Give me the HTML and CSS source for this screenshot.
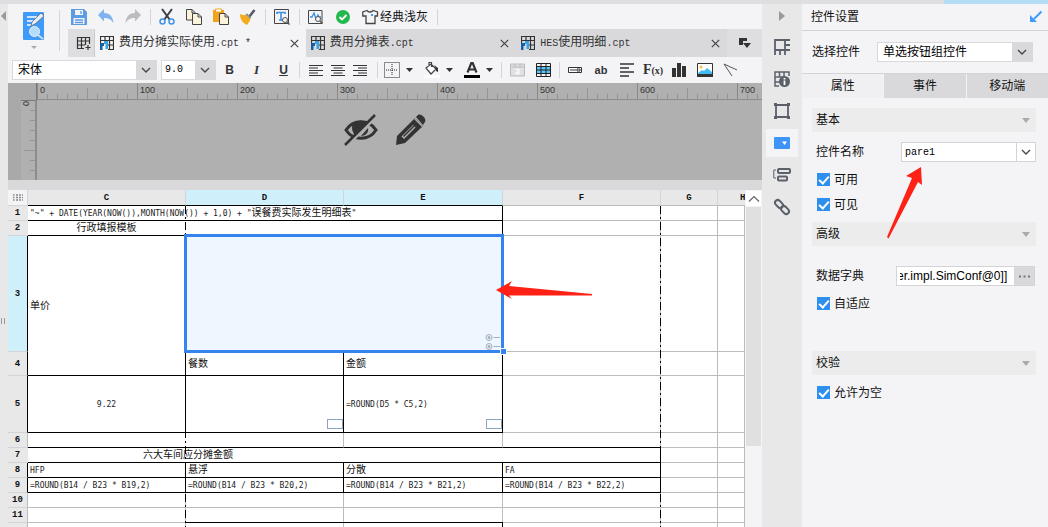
FILE: index.html
```html
<!DOCTYPE html>
<html lang="zh-CN">
<head>
<meta charset="utf-8">
<title>报表设计器</title>
<link rel="stylesheet" href="styles.css">
</head>
<body>
<svg class="defs" aria-hidden="true">
  <symbol id="chev" viewBox="0 0 10 10"><path d="M1 3l4 4 4-4" fill="none" stroke="#444" stroke-width="1.3"/></symbol>
  <symbol id="down" viewBox="0 0 8 8"><path d="M0 2h7L3.5 6z" fill="#333"/></symbol>
  <symbol id="x" viewBox="0 0 9 9"><path d="M.8.8l7.4 7.4M8.200.8L.8 8.200" stroke="#444" stroke-width="1.2"/></symbol>
  <symbol id="cpt" viewBox="0 0 14 14"><path d="M.5 7V.5h13v13H8M.5 4.500h13M5 .5v4M9.500.5v13M7 9h6.500" fill="none" stroke="#333" stroke-width="1.200"/><path d="M0 7h4v3H2.500v4H0z" fill="#1460a8"/><path d="M4 5h4v8H5.500V8H4z" fill="#38a4e8"/></symbol>
  <symbol id="lens" viewBox="0 0 8 8"><circle cx="3" cy="3" r="2.500" fill="#f4f4f7" stroke="#555"/><path d="M5 5l2.500 2.500" stroke="#555" stroke-width="1.500"/></symbol>
</svg>
<div class="titlebar"><div class="titlebar-accent"></div></div>
<div class="app">
  <aside class="gutter">
    <svg width="5" height="10"><path d="M5 0v10L0 5z" fill="#999"/></svg>
    <svg class="grip" width="4" height="6"><path d="M.5 0v6M3.500 0v6" stroke="#999"/></svg>
  </aside>
  <main class="editor">
    <header class="head">
      <button class="template" aria-label="模板">
        <svg width="24" height="30" viewBox="0 0 24 30"><rect x="1" y="1" width="21" height="28" rx="1" fill="#3f9bfa"/><path d="M5 6h10M5 10h7M5 14h4" stroke="#fff" stroke-width="1.500"/><path d="M9 15l1-4L19 2l3 3-9 8z" fill="#e8eef4" stroke="#667" stroke-width=".8"/><circle cx="12.500" cy="20.500" r="5" fill="#b4dcf8" stroke="#e8f2fa"/><path d="M16 24l5 4" stroke="#d4dade" stroke-width="2"/></svg>
        <svg width="6" height="4"><path d="M0 0h6L3 3z" fill="#aaa"/></svg>
      </button>
      <div class="head-right">
        <div class="tools">
          <button aria-label="保存"><svg width="16" height="16"><path d="M0 0h13l3 3v13H0z" fill="#5d9ce0"/><path d="M4 1h8v5H4zM2.500 9h11v6h-11z" fill="#f4f4f7"/><path d="M10 2v3M4 11h8M4 13.500h8" stroke="#5d9ce0" stroke-width="1.300"/></svg></button>
          <button aria-label="撤销"><svg width="16" height="16"><path d="M6 0v4c6 0 9 4 9.500 10C13 10 10 9 6 9v3.500L0 6z" fill="#7fb2ee"/></svg></button>
          <button aria-label="重做"><svg width="16" height="16"><path d="M10 0v4C4 4 1 8 .5 14 3 10 6 9 10 9v3.500L16 6z" fill="#bcbcbe"/></svg></button>
          <i class="sep"></i>
          <button aria-label="剪切"><svg width="16" height="16"><path d="M3 0l8 11M13 0L5 11" stroke="#3a3f4a" stroke-width="2"/><circle cx="3.500" cy="12.500" r="2.500" fill="none" stroke="#3f94e8" stroke-width="1.500"/><circle cx="12.500" cy="12.500" r="2.500" fill="none" stroke="#3f94e8" stroke-width="1.500"/></svg></button>
          <button aria-label="复制"><svg width="16" height="16"><path d="M.5.5H6l3 3v7.500H.5zM6 .5V4h3" fill="#fbf3dc" stroke="#444"/><path d="M6.500 4.500H12l3.500 3.500v7.500h-9zM12 4.500V8h3.500" fill="#fbf3dc" stroke="#444"/></svg></button>
          <button aria-label="粘贴"><svg width="16" height="16"><path d="M0 1h11v12H0z" fill="#f0a41c"/><path d="M2.500 0h6v3h-6z" fill="#fff" stroke="#f0a41c"/><path d="M6.500 4.500H12l3.500 3.500v7.500h-9zM12 4.500V8h3.500" fill="#fbf3dc" stroke="#444"/></svg></button>
          <button aria-label="格式刷"><svg width="16" height="16"><path d="M14.500 1L9 8" stroke="#556" stroke-width="2.500"/><path d="M0 5c3 2 5 1 7-.5l4 4C10 11 9 14 7 16 3 14 0 11 0 5z" fill="#f2ac1e"/><path d="M6.500 5l4 4" stroke="#5f8fc8" stroke-width="1.500"/></svg></button>
          <i class="sep"></i>
          <button aria-label="查找"><svg width="16" height="16"><path d="M.5.5h14v14H.5z" fill="none" stroke="#444"/><path d="M3 5V3.500h8V5M7 3.500V11M5 11h4" fill="none" stroke="#3f8fe0" stroke-width="1.600"/><use href="#lens" x="8" y="8" width="8" height="8"/></svg></button>
          <i class="sep"></i>
          <button aria-label="检测"><svg width="16" height="16"><path d="M.5 1.500h13.500v13H.5z" fill="none" stroke="#444"/><path d="M2 8h2l2-4 2 6 2-4 1 2h2" fill="none" stroke="#3f8fe0" stroke-width="1.300"/><use href="#lens" x="7" y="7" width="8" height="8"/></svg></button>
          <button aria-label="校验通过"><svg width="16" height="16"><circle cx="8" cy="8" r="7" fill="#21b84f"/><path d="M4.500 8l2.500 2.500L11.500 6" fill="none" stroke="#fff" stroke-width="1.800"/></svg></button>
          <button class="theme"><svg width="16" height="16"><path d="M5 1.500L.8 3v4H4v7.500h9V7h2.500V3L11 1.500c-1 2-5 2-6 0z" fill="none" stroke="#444" stroke-width="1.300"/><path d="M9 6h2" stroke="#3f9bfa" stroke-width="2"/></svg>经典浅灰</button>
          <i class="sep"></i>
        </div>
        <nav class="tabs">
          <button class="tab-new" aria-label="新建"><svg width="15" height="14"><path d="M8 12.500H1.500v-11h12V8M1.500 5h12M1.500 9H9M5.500 1.500v11M9.500 1.500V9M12 9v5M9.500 11.500h5" fill="none" stroke="#333" stroke-width="1.200"/></svg></button>
          <div class="tab on"><svg width="14" height="14"><use href="#cpt"/></svg><span>费用分摊实际使用<b>.cpt *</b></span><button aria-label="关闭"><svg width="9" height="9"><use href="#x"/></svg></button></div>
          <div class="tab"><svg width="14" height="14"><use href="#cpt"/></svg><span>费用分摊表<b>.cpt</b></span><button aria-label="关闭"><svg width="9" height="9"><use href="#x"/></svg></button></div>
          <div class="tab"><svg width="14" height="14"><use href="#cpt"/></svg><span><b>HES</b>使用明细<b>.cpt</b></span><button aria-label="关闭"><svg width="9" height="9"><use href="#x"/></svg></button></div>
          <button class="tab-more" aria-label="更多"><svg width="12" height="10"><path d="M0 0h8v3H4v4H0z" fill="#333"/><path d="M4 5h8L8 10z" fill="#333"/></svg></button>
        </nav>
      </div>
    </header>
    <div class="format">
      <div class="combo font"><select aria-label="字体"><option>宋体</option></select><svg width="10" height="10"><use href="#chev"/></svg></div>
      <div class="combo size"><select aria-label="字号"><option>9.0</option></select><svg width="10" height="10"><use href="#chev"/></svg></div>
      <button class="w27 bold">B</button><button class="w27 ital">I</button><button class="w27 under">U</button>
      <i class="sep s1"></i>
      <button class="w22" aria-label="左对齐"><svg width="14" height="11"><path d="M0 .5h14M0 3h9M0 5.500h14M0 8h9M0 10.500h14" stroke="#333" stroke-width="1.200"/></svg></button>
      <button class="w22" aria-label="居中"><svg width="14" height="11"><path d="M0 .5h14M2.500 3h9M0 5.500h14M2.500 8h9M0 10.500h14" stroke="#333" stroke-width="1.200"/></svg></button>
      <button class="w22" aria-label="右对齐"><svg width="14" height="11"><path d="M0 .5h14M5 3h9M0 5.500h14M5 8h9M0 10.500h14" stroke="#333" stroke-width="1.200"/></svg></button>
      <i class="sep s2"></i>
      <button class="drop" aria-label="边框"><svg width="16" height="16"><path d="M.5.500h15v15H.5zM8 2v12M2 8h12" fill="none" stroke="#222" stroke-dasharray="1 1"/></svg><svg width="8" height="8"><use href="#down"/></svg></button>
      <button class="drop" aria-label="填充"><svg width="16" height="16"><path d="M0 13h16v3H0z" fill="#fff"/><path d="M2 6l5-4 5 5-5 5zM5 4V.5h2.500V5" fill="#fff" stroke="#444" stroke-width="1.200"/><path d="M10 3l4 3v4l-2-1V7z" fill="#333"/></svg><svg width="8" height="8"><use href="#down"/></svg></button>
      <button class="drop" aria-label="文字颜色"><svg width="16" height="16"><path d="M3.500 10.500L7.300 1h1.400l3.800 9.500M5 7.500h6" fill="none" stroke="#333" stroke-width="2.200"/><path d="M0 13h16v3H0z" fill="#000"/></svg><svg width="8" height="8"><use href="#down"/></svg></button>
      <i class="sep s3"></i>
      <button class="w26" aria-label="单元格" disabled><svg width="15" height="14"><path d="M.5 1h14v12H.5zM.5 4h14M5 1v3M10 1v3" fill="#e0e0e3" stroke="#bbb"/><path d="M5.500 6.500h3.500v4.500H6V9h3" fill="none" stroke="#fff"/></svg></button>
      <button class="w26" aria-label="表格"><svg width="15" height="14"><path d="M1 4h13v6H1z" fill="#58c4f8"/><path d="M.5.5h14v13H.5zM1 3.500h13M1 7h13M1 10.500h13M5 1v12M10 1v12" fill="none" stroke="#222"/></svg></button>
      <i class="sep s4"></i>
      <button class="w26" aria-label="文本框"><svg width="14" height="6"><path d="M.5.5h13v5H.5z" fill="#fff" stroke="#333"/><path d="M2 3h6M9 2h3v2H9z" fill="none" stroke="#333"/></svg></button>
      <button class="w26 ab">ab</button>
      <button class="w26" aria-label="段落"><svg width="14" height="14"><path d="M0 1h14M0 5h9M0 9h14M0 13h9" stroke="#333" stroke-width="1.600"/></svg></button>
      <button class="w26 fx">F<small>(x)</small></button>
      <button class="w26" aria-label="图表"><svg width="14" height="14"><path d="M0 5h4v9H0zM5 0h4v14H5zM10 3h4v11h-4z" fill="#333"/></svg></button>
      <button class="w26" aria-label="图片"><svg width="16" height="14"><path d="M.5.5h15v13H.5z" fill="#fff" stroke="#333"/><path d="M1 10l4-3 2 1 3-3 5 4v2H1z" fill="#42bdf4"/><path d="M0 11h16v3H0z" fill="#333"/><circle cx="4" cy="4" r="1.500" fill="#f5c242"/></svg></button>
      <button class="w26" aria-label="斜线"><svg width="14" height="14"><path d="M0 1l13 6M0 1l8 12" fill="none" stroke="#555"/></svg></button>
    </div>
    <section class="canvas">
      <div class="corner"></div>
      <div class="ruler-h"><span>0</span><span>100</span><span>200</span><span>300</span><span>400</span><span>500</span><span>600</span><span>700</span></div>
      <div class="ruler-v"><span>0</span></div>
      <div class="stage">
        <svg width="34" height="32"><path d="M2 16c7-11 23-11 30 0-7 11-23 11-30 0z" fill="none" stroke="#333" stroke-width="3"/><path d="M9 9c4-3 12-3 15 0L12 22c-4-3-5-9-3-13z" fill="#333"/><path d="M24 14c1 4-2 8-7 8z" fill="#333"/><path d="M2 32L32 2" stroke="#b0b0b0" stroke-width="4"/><path d="M1 31L31 1" stroke="#333" stroke-width="2.500"/></svg>
        <svg width="32" height="32"><path d="M2 22L20 4l8 8L10 29l-9 2z" fill="#333"/><path d="M21 3l2-2c3-2 9 4 7 7l-2 3z" fill="#333"/><path d="M19.500 4.500l8 8" stroke="#b0b0b0" stroke-width="1.200"/><path d="M6.500 22.500L18 11l2.500 2.500L9 25z" fill="#b0b0b0"/><path d="M8.500 22.500L19 12" stroke="#333" stroke-width="1.500"/></svg>
      </div>
    </section>
    <section class="sheet">
      <div class="sheet-view">
        <table>
          <colgroup><col class="c0"><col class="c1"><col class="c1"><col class="c2"><col class="c1"><col class="c3"><col></colgroup>
          <thead><tr><th class="all"><svg width="10" height="7"><path d="M0 1h1.500M3 1h7M0 3.500h1.500M3 3.500h7M0 6h1.500M3 6h7" stroke="#888" stroke-width="1.300" stroke-dasharray="2 1"/></svg></th><th class="kb">C</th><th class="kb hot">D</th><th class="kb hot">E</th><th>F</th><th>G</th><th class="cut">H</th></tr></thead>
          <tbody>
          <tr class="h15"><th>1</th><td colspan="3" class="kb kr"><b>"~" + DATE(YEAR(NOW()),MONTH(NOW()) + 1,0) + "</b>误餐费实际发生明细表<b>"</b></td><td></td><td></td><td></td></tr>
          <tr class="h15"><th>2</th><td class="mid kb nr">行政填报模板</td><td colspan="2" class="kr kb"></td><td></td><td></td><td></td></tr>
          <tr class="h116"><th class="hot kr">3</th><td rowspan="2" class="kr kb">单价</td><td colspan="2" class="sel kr"><div class="frame"><svg width="16" height="16"><g fill="none" stroke="#a4aebe"><circle cx="4" cy="3.500" r="3"/><circle cx="4" cy="12.500" r="3"/><path d="M8.500 3.500H15M8.500 12.500H15"/></g><circle cx="4" cy="3.500" r="1.500" fill="#a4aebe"/><circle cx="4" cy="12.500" r="1.500" fill="#a4aebe"/></svg></div></td><td></td><td></td><td></td></tr>
          <tr class="h24"><th class="kr">4</th><td class="kr kb">餐数</td><td class="kr kb">金额</td><td></td><td></td><td></td></tr>
          <tr class="h57"><th class="kr">5</th><td class="mid kr kb"><b>9.22</b></td><td class="kr kb field"><i></i></td><td class="kr kb field"><b>=ROUND(D5 * C5,2)</b><i></i></td><td></td><td></td><td></td></tr>
          <tr class="h15"><th class="gr">6</th><td class="nr kb"></td><td class="kb"></td><td class="kb"></td><td class="kb"></td><td></td><td></td></tr>
          <tr class="h15"><th>7</th><td colspan="4" class="sum kr kb">六大车间应分摊金额</td><td></td><td></td></tr>
          <tr class="h15"><th class="kr">8</th><td class="kr kb"><b>HFP</b></td><td class="kr kb">悬浮</td><td class="kr kb">分散</td><td class="kr kb"><b>FA</b></td><td></td><td></td></tr>
          <tr class="h15"><th class="kr">9</th><td class="kr kb"><b>=ROUND(B14 / B23 * B19,2)</b></td><td class="kr kb"><b>=ROUND(B14 / B23 * B20,2)</b></td><td class="kr kb"><b>=ROUND(B14 / B23 * B21,2)</b></td><td class="kr kb"><b>=ROUND(B14 / B23 * B22,2)</b></td><td></td><td></td></tr>
          <tr class="h15"><th class="gr">10</th><td></td><td></td><td></td><td></td><td></td><td></td></tr>
          <tr class="h15"><th class="gr">11</th><td></td><td></td><td></td><td></td><td></td><td></td></tr>
          <tr class="h15"><th class="gr"></th><td></td><td class="kt"></td><td class="kt kr"></td><td></td><td></td><td></td></tr>
          </tbody>
        </table>
        <div class="page-break first"></div>
        <div class="page-break second"></div>
      </div>
      <div class="scroll"><button aria-label="向上"><svg width="10" height="6"><path d="M0 5.500l5-5 5 5" fill="none" stroke="#666" stroke-width="1.200"/></svg></button><div class="thumb"></div></div>
    </section>
  </main>
  <nav class="rail">
    <button aria-label="收起"><svg width="6" height="10"><path d="M0 0l6 5-6 5z" fill="#999"/></svg></button>
    <button aria-label="单元格元素"><svg width="16" height="16"><path d="M1 16V1h15M11 1v10M1 11h15M11 6h5M6 11v5M11 11v5" fill="none" stroke="#5c606b" stroke-width="1.800"/></svg></button>
    <button aria-label="单元格属性"><svg width="16" height="16"><path d="M5 15H1V1h14v4M1 6h9M1 11h5M5.500 1v5M10 1v4" fill="none" stroke="#5c606b" stroke-width="1.500"/><circle cx="10.500" cy="10.500" r="5.500" fill="#5c606b"/><path d="M10.500 7v1.500M10.500 9.500V14" stroke="#fff" stroke-width="1.800"/></svg></button>
    <button aria-label="悬浮元素"><svg width="16" height="16"><path d="M2 2h12v12H2z" fill="none" stroke="#5c606b" stroke-width="1.800"/><path d="M0 0h3v3H0zM13 0h3v3h-3zM0 13h3v3H0zM13 13h3v3h-3z" fill="#5c606b"/></svg></button>
    <button class="on" aria-label="控件设置"><svg width="16" height="12"><rect width="16" height="12" rx="1" fill="#3f94f8"/><path d="M8 4.500h5L10.500 8z" fill="#fff"/></svg></button>
    <button aria-label="条件属性"><svg width="18" height="14"><path d="M3 2H.8v8H3" fill="none" stroke="#5c606b"/><rect x="5" y="1" width="12" height="4" rx="1" fill="none" stroke="#5c606b" stroke-width="2"/><rect x="5" y="8.500" width="9" height="4" rx="1" fill="none" stroke="#5c606b" stroke-width="2"/></svg></button>
    <button aria-label="超级链接"><svg width="16" height="16"><g fill="none" stroke="#5c606b" stroke-width="2"><rect x="-4.500" y="-2.700" width="9" height="5.400" rx="2.700" transform="translate(5 5) rotate(45)"/><rect x="-4.500" y="-2.700" width="9" height="5.400" rx="2.700" transform="translate(11 11) rotate(45)"/></g></svg></button>
  </nav>
  <aside class="panel">
    <h2>控件设置<svg width="12" height="12"><path d="M11.500.5L4 8" stroke="#3f9bfa" stroke-width="2"/><path d="M0 11V4l7 7z" fill="#3f9bfa"/></svg></h2>
    <div class="pick"><label for="kind">选择控件</label><div class="combo kind"><select id="kind"><option>单选按钮组控件</option></select><svg width="10" height="10"><use href="#chev"/></svg></div></div>
    <div class="ptabs"><button class="on">属性</button><button>事件</button><button>移动端</button></div>
    <div class="props">
      <button class="group">基本<svg width="8" height="5"><path d="M0 0h8L4 5z" fill="#aaa"/></svg></button>
      <div class="row"><label for="name">控件名称</label><div class="entry"><input id="name" value="pare1"><button aria-label="展开"><svg width="10" height="10"><use href="#chev"/></svg></button></div></div>
      <label class="check"><input type="checkbox" checked>可用</label>
      <label class="check"><input type="checkbox" checked>可见</label>
      <button class="group g2">高级<svg width="8" height="5"><path d="M0 0h8L4 5z" fill="#aaa"/></svg></button>
      <div class="row r2"><label for="dict">数据字典</label><div class="entry dict"><input id="dict" value="er.impl.SimConf@0]]"><button aria-label="编辑"><svg width="11" height="3"><path d="M0 1.500h11" stroke="#777" stroke-width="2" stroke-dasharray="2 2.500"/></svg></button></div></div>
      <label class="check c2"><input type="checkbox" checked>自适应</label>
      <button class="group g3">校验<svg width="8" height="5"><path d="M0 0h8L4 5z" fill="#aaa"/></svg></button>
      <label class="check c2"><input type="checkbox" checked>允许为空</label>
    </div>
  </aside>
</div>
<svg class="arrow a1" width="97" height="18"><path d="M0 9L16 0l-3 5 83 8v1.500H13l3 3.500z" fill="#ff2016"/></svg>
<svg class="arrow a2" width="36" height="72"><path d="M34 0L19 9l6 2L0 70l1.500 1.500L31 15l4 3z" fill="#ff2016"/></svg>
</body>
</html>
```
FILE: styles.css
```css
* { box-sizing: border-box; }
html, body { height: 100%; margin: 0; }
body {
  display: flex; flex-direction: column; position: relative; overflow: hidden;
  background: #f4f4f7; color: #111;
  font: 12px/16px "Liberation Sans", "Noto Sans CJK SC", sans-serif;
}
button { padding: 0; border: 0; background: none; color: inherit; font: inherit; display: flex; align-items: center; justify-content: center; }
svg { display: block; flex: none; overflow: visible; }
.defs { position: absolute; width: 0; height: 0; }
.titlebar { height: 4px; flex: none; background: #dedee0; display: flex; justify-content: flex-end; }
.titlebar-accent { width: 104px; background: #b5dcf5; }
.app { flex: 1; min-height: 0; display: flex; }
.gutter { width: 8px; flex: none; background: #e8e8e8; display: flex; flex-direction: column; padding: 7px 0 0 1px; }
.grip { margin-top: 297px; }
.editor { flex: 1; min-width: 0; display: flex; flex-direction: column; }
.sep { width: 1px; height: 16px; background: #d4d4d8; flex: none; }

.head { display: flex; flex: none; height: 53px; }
.template { width: 52px; margin: 6px 8px 6px 0; border-right: 1px solid #d4d4d8; flex-direction: column; gap: 5px; }
.head-right { flex: 1; display: flex; flex-direction: column; }
.tools { height: 25px; display: flex; align-items: center; gap: 11px; padding-left: 3px; }
.tools .sep { margin: 0 -3px 0 -2px; }
.theme { gap: 2px; }
.tabs { height: 28px; display: flex; background: #d9d9dc; color: #333; }
.tab-new { width: 27px; padding-left: 4px; background: #dedee0; border-right: 1px solid #ccc; }
.tab { flex: 1; display: flex; align-items: center; gap: 5px; padding: 0 7px 0 5px; }
.tab.on { background: #f4f4f7; }
.tab button { margin-left: auto; }
.tab b, td b { font-weight: 400; font-family: "Liberation Mono", monospace; font-size: 10px; }
.tab-more { width: 35px; background: #dedee0; }

.format { height: 26px; flex: none; display: flex; align-items: center; padding-left: 4px; color: #333; }
.combo { display: grid; grid-template-columns: 1fr 20px; background: #fff; border: 1px solid #d9d9dc; height: 20px; align-items: center; justify-items: center; }
.combo select { grid-area: 1 / 1 / 2 / 3; width: 100%; height: 18px; appearance: none; border: 0; border-radius: 0; padding: 0 20px 0 5px; color: #000; font: inherit; background: linear-gradient(#d9d9dc, #d9d9dc) right / 20px 100% no-repeat #fff; }
.combo svg { grid-area: 1 / 2; pointer-events: none; z-index: 1; }
.font { width: 145px; margin-right: 4px; }
.size { width: 55px; }
.size select { font-family: "Liberation Mono", monospace; font-size: 10px; padding-left: 3px; }
.w27 { width: 27px; } .w26 { width: 26px; } .w22 { width: 22px; }
.bold { font-weight: 700; font-size: 12px; }
.ital { font: italic 700 13px "Liberation Serif", serif; }
.under { text-decoration: underline; font-weight: 700; }
.drop { width: 40px; justify-content: flex-start; padding-left: 4px; gap: 6px; }
.ab { font-weight: 700; font-size: 11px; }
.fx { font: 700 14px "Liberation Serif", serif; }
.fx small { font-size: 10px; }
.s1 { margin: 0 5px 0 2px; } .s2 { margin: 0 2px 0 6px; } .s3 { margin: 0 2px 0 1px; } .s4 { margin: 0 2px 0 3px; }

.canvas { height: 97px; flex: none; display: grid; grid-template: 17px 1fr / 29px 1fr; background: #b0b0b0; }
.corner { background: #a9a9a9; border-right: 1px solid #777; }
.ruler-h {
  display: flex; overflow: hidden; border-bottom: 1px solid #8c8c8c;
  background:
    repeating-linear-gradient(90deg, #888 0 1px, transparent 1px 100px) 0 0 / 100% 16px no-repeat,
    repeating-linear-gradient(90deg, #949494 0 1px, transparent 1px 50px) 0 5px / 100% 11px no-repeat,
    repeating-linear-gradient(90deg, #949494 0 1px, transparent 1px 10px) 0 11px / 100% 5px no-repeat;
}
.ruler-h span { flex: none; width: 100px; padding-left: 3px; font-size: 9px; line-height: 14px; color: #333; }
.ruler-v {
  margin-left: 13px; border-top: 1px solid #777; border-right: 2px solid #8c8c8c; overflow: hidden;
  background:
    repeating-linear-gradient(transparent 0 49px, #949494 49px 50px) right / 11px 100% no-repeat,
    repeating-linear-gradient(transparent 0 9px, #949494 9px 10px) right / 5px 100% no-repeat;
  box-shadow: -13px 0 #a9a9a9;
}
.ruler-v span { display: block; width: 10px; line-height: 10px; font-size: 9px; writing-mode: vertical-rl; color: #333; }
.stage { display: flex; justify-content: center; gap: 17px; padding: 14px 29px 0 0; }

.sheet { flex: 1; min-height: 0; display: flex; border-top: 10px solid #d9d9db; }
.sheet-view { flex: 1; position: relative; overflow: hidden; background: #fff; }
table { width: 100%; table-layout: fixed; border-collapse: separate; border-spacing: 0; font-size: 10px; line-height: 12px; }
.c0 { width: 20px; } .c1 { width: 158px; } .c2 { width: 159px; } .c3 { width: 57px; }
td, th { padding: 0; border: 0 solid #bcbcbc; border-width: 0 1px 1px 0; white-space: nowrap; }
td { padding: 0 2px; text-align: left; }
td b { font-family: "DejaVu Sans Mono", monospace; font-size: 8px; color: #222; }
th { background: #e8e8e8; color: #111; font: 700 9px/12px "Liberation Mono", monospace; }
thead th { height: 16px; border-right-color: #d4d4d8; }
thead th.cut { overflow: hidden; padding-left: 22px; border-right: 0; }
tbody th { border-color: #e8e8e8; border-bottom-color: #d4d4d8; }
th.all { background: #f4f4f7; border-color: #d4d4d8; }
th.all svg { margin: 0 auto; }
thead .hot, tbody .hot { background: #cff0fb; }
tbody .gr { border-right-color: #bcbcbc; }
tbody .kr { border-right-color: #000; }
thead .kb, .kb { border-bottom-color: #000; }
.kt { box-shadow: 0 -1px #000; }
.nr { border-right-color: #fff; }
.mid { text-align: center; }
.sum { padding-left: 115px; }
.h15 { height: 15px; } .h116 { height: 116px; } .h24 { height: 24px; } .h57 { height: 57px; }
.sel { position: relative; background: #eef6ff; }
.frame { position: absolute; inset: -2px; z-index: 2; border: 3px solid #3584ee; display: flex; align-items: flex-end; justify-content: flex-end; }
.frame::after { content: ""; position: absolute; right: -5px; bottom: -4px; width: 5px; height: 5px; background: #3584ee; outline: 1px solid #fff; }
.field { position: relative; }
.field i { position: absolute; right: 0; bottom: 3px; width: 16px; height: 10px; border: 1px solid #8ea4c4; }
.page-break { position: absolute; top: 16px; bottom: 0; width: 1px; background: repeating-linear-gradient(#000 0 8px, transparent 8px 11px, #000 11px 13px, transparent 13px 16px); }
.first { left: 177px; } .second { left: 652px; }
.scroll { width: 17px; flex: none; padding: 1px 1px 0; }
.scroll button { width: 15px; height: 15px; background: #fff; }
.thumb { height: 239px; margin-top: 1px; background: #e0e0e0; }

.rail { width: 40px; flex: none; background: #e8e8e8; display: flex; flex-direction: column; align-items: center; gap: 4px; }
.rail button { width: 32px; height: 28px; }
.rail button:first-child { height: 24px; }
.rail .on { background: #f4f4f7; }
.rail button:nth-child(2) { margin-top: 1px; }

.panel { width: 246px; flex: none; }
.panel h2 { margin: 0; height: 27px; padding: 0 6px 0 9px; display: flex; justify-content: space-between; align-items: center; font: inherit; border-bottom: 1px solid #d4d4d8; }
.pick { height: 43px; display: flex; align-items: center; gap: 17px; padding: 0 15px 0 10px; border-bottom: 1px solid #d4d4d8; }
.kind { flex: 1; }
.ptabs { display: grid; grid-template-columns: repeat(3, 1fr); gap: 1px; height: 24px; }
.ptabs button { background: #d9d9dc; }
.ptabs .on { background: #f0f0f2; }
.props { padding: 10px 12px 0 10px; }
.group { width: 100%; height: 24px; justify-content: space-between; padding: 0 6px 0 4px; background: #ececec; }
.g2 { margin-top: 5px; } .g3 { margin-top: 35px; }
.row { display: flex; justify-content: space-between; align-items: center; padding-left: 4px; margin: 10px 0 5px; }
.r2 { margin: 20px 1px 5px 0; }
.entry { width: 135px; height: 20px; display: flex; border: 1px solid #d4d4d8; background: #fff; }
.entry input { flex: 1; min-width: 0; border: 0; padding: 0 3px; background: none; color: #000; font: 10px "Liberation Mono", monospace; }
.entry button { width: 19px; border-left: 1px solid #d4d4d8; }
.dict { width: 139px; }
.entry.dict input { padding: 0 0 0 3px; text-indent: -3px; font: 12px "Liberation Sans", sans-serif; }
.dict button { width: 20px; background: #d9d9dc; }
.check { display: flex; align-items: center; gap: 4px; height: 25px; padding-left: 5px; }
.c2 { margin-top: 5px; }
.check input { appearance: none; margin: 0; width: 13px; height: 13px; background: #2e90ee; display: grid; place-items: center; }
.check input::before { content: ""; width: 4px; height: 8px; border: solid #fff; border-width: 0 2px 2px 0; transform: rotate(42deg); margin-top: -2px; }

.arrow { position: absolute; z-index: 5; pointer-events: none; }
.a1 { left: 496px; top: 281px; }
.a2 { left: 887px; top: 167px; }
```
